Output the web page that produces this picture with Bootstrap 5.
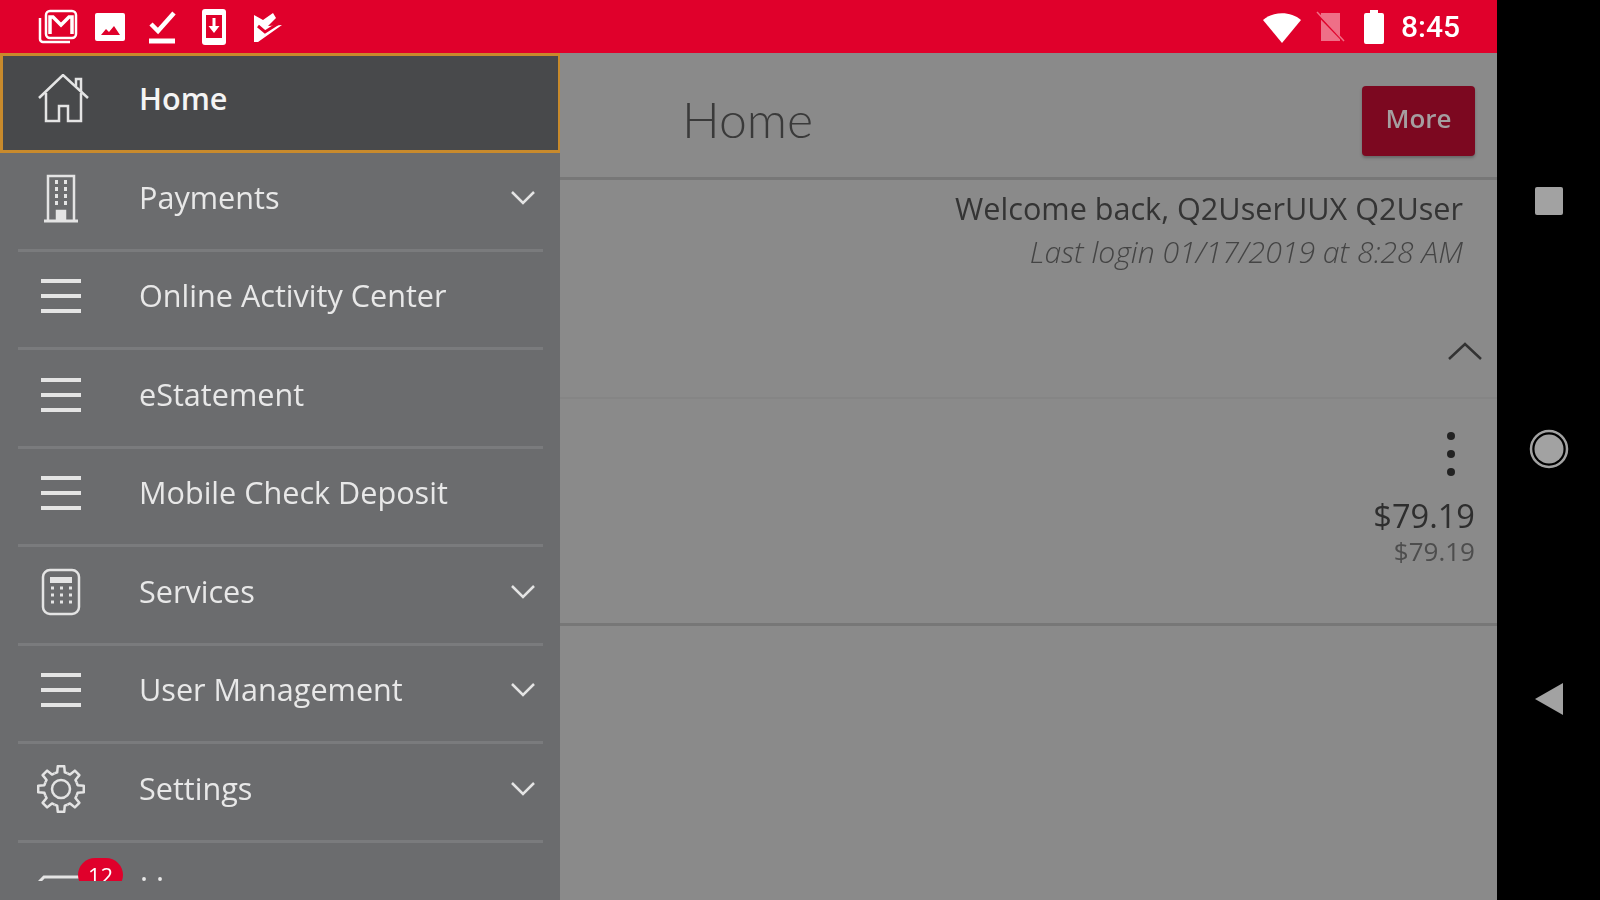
<!DOCTYPE html>
<html lang="en">
<head>
  <meta charset="UTF-8">
  <title>Home</title>
  <link href="https://cdn.jsdelivr.net/npm/bootstrap@5.3.3/dist/css/bootstrap.min.css" rel="stylesheet">
  <style>
    html, body { height: 900px; overflow: hidden; background: #000; }
    body { font-family: "Open Sans", "Liberation Sans", sans-serif; }
    .screen { width: 1497px; height: 900px; }
    .status-bar > div, .side-clip, .main-pane > div, .nav-rail { filter: blur(.7px); }
    .status-bar { height: 53px; background: #e0002b; color: #fff; padding: 0 37px 0 38px; }
    .status-icons { gap: 12px; }
    .status-time { font-family: Roboto, sans-serif; font-size: 30px; font-weight: 500; line-height: 1; margin-left: 16px; }
    .sim-icon { margin-left: 13px; }
    .batt-icon { margin-left: 18px; }
    .side-menu { width: 560px; height: 847px; background: #6b6c6e; }
    .side-clip { height: 828px; overflow: hidden; }
    .menu-row { background: transparent; border: 0; padding: 0; color: #e8e8e8; font-size: 30.6px; }
    .menu-inner { height: 98.5px; margin: 0 17px 0 18px; padding-bottom: 6px; border-bottom: 3px solid #7a7b7d; }
    .menu-row.active-row { height: 100px; background: #48494b; border: 3px solid #c88a2c; border-right-width: 2px; color: #f4f4f4; font-weight: 600; margin: 0; }
    .active-row .menu-inner { height: auto; flex-grow: 1; margin: 0 0 0 15px; border: 0; padding-bottom: 8px; }
    .menu-icon { width: 84px; flex: none; padding-left: 2px; margin-right: 37px; text-align: center; line-height: 0; }
    .home-icon { margin-left: 5px; }
    .menu-chevron { margin-left: auto; margin-right: 7px; line-height: 0; }
    .badge-count { position: absolute; left: 78px; top: 15px; width: 45px; height: 34px; border-radius: 17px; background: #e0002b; color: #fff; font-size: 22px; text-align: center; line-height: 34px; }
    .last-row { height: 70px; padding: 30px 0 0 38px; }
    .last-dots { margin: -19px 0 0 58px; line-height: 1; }
    .main-pane { background: #8a8a8a; color: #333; }
    .page-head { height: 127px; padding: 12px 22px 0 122px; border-bottom: 3px solid #777; }
    .page-title { font-family: Lato, sans-serif; font-weight: 300; font-size: 50px; margin: 0 0 4px; color: #3a3a3a; }
    .more-btn { width: 113px; height: 70px; background: #7c0820; border: 0; color: #a59ea0; font-size: 26px; font-weight: 600; padding: 0 0 6px; box-shadow: 0 2px 3px rgba(0,0,0,.25); }
    .welcome-box { padding: 6px 34px 0 0; text-align: right; font-size: 30.6px; line-height: 44px; color: #343434; }
    .last-login { font-style: italic; font-weight: 300; font-size: 30.2px; color: #444; }
    .collapse-row { height: 125px; padding: 31px 15px 0 0; border-bottom: 2px solid #858585; text-align: right; line-height: 0; }
    .account-row { height: 227px; padding: 0 22px 0 0; border-bottom: 3px solid #777; text-align: right; }
    .dots-btn { padding: 32px 19px 0 0; line-height: 0; }
    .amount-main { font-size: 32.6px; font-weight: 500; line-height: 40px; margin-top: 19px; color: #2e2e2e; }
    .amount-sub { font-size: 26px; line-height: 32px; margin-top: -1px; color: #4d4d4d; }
    .nav-rail { width: 103px; background: #000; padding-top: 187px; }
    .nav-rail svg { display: block; }
    .nav-circle, .nav-back { margin-top: 214px; }
  </style>
</head>
<body class="d-flex">

  <div class="screen d-flex flex-column">
    <div class="status-bar d-flex align-items-center justify-content-between">
      <div class="status-icons d-flex">
        <svg width="40" height="36" viewBox="0 0 40 36" fill="none" stroke="#fff"><path d="M2 9v21a3 3 0 0 0 3 3h27" stroke-width="2.500"/><rect x="8" y="2" width="30" height="27" rx="4" fill="#e0002b" stroke-width="2.500"/><path d="M12 25V8h3l8 8 8-8h3v17" stroke-width="3.500"/></svg>
        <svg width="40" height="36" viewBox="0 0 40 36"><path fill="#fff" d="M7 4h26a2 2 0 0 1 2 2v24a2 2 0 0 1-2 2H7a2 2 0 0 1-2-2V6a2 2 0 0 1 2-2z"/><path fill="#e0002b" d="M11 26l5-6 3 3 5-6 6 9z"/></svg>
        <svg width="40" height="36" viewBox="0 0 40 36" fill="none" stroke="#fff"><path d="M9 15l7 7L32 4" stroke-width="4.500"/><path d="M7 32h26" stroke-width="5"/></svg>
        <svg width="40" height="36" viewBox="0 0 40 36"><path fill="#fff" d="M11 0h18a3 3 0 0 1 3 3v30a3 3 0 0 1-3 3H11a3 3 0 0 1-3-3V3a3 3 0 0 1 3-3z"/><rect x="12" y="6" width="16" height="23" fill="#e0002b"/><path fill="#fff" d="M18.500 9h3v8h4l-5.500 7-5.500-7h4z"/></svg>
        <svg width="40" height="36" viewBox="0 0 40 36"><path fill="#fff" d="M8 6l9 5 10-7 3 5-8 8 14-1-24 17h-4z"/><path fill="none" stroke="#e0002b" stroke-width="3" d="M12 17l7 6 14-9"/></svg>
      </div>
      <div class="d-flex align-items-center">
        <svg width="40" height="34" viewBox="0 0 40 34"><path fill="#fff" d="M1 10C11 1 29 1 39 10L20 33z"/></svg>
        <svg width="30" height="32" viewBox="0 0 30 32" class="sim-icon"><path fill="#ef6f87" d="M6 2h19v28H6z"/><path stroke="#e0002b" stroke-width="2" d="M0 1l30 31"/><path stroke="#ef6f87" stroke-width="1.500" d="M2 1l27 29"/></svg>
        <svg width="22" height="34" viewBox="0 0 22 34" class="batt-icon"><path fill="#fff" d="M7 0h8v3h4a2 2 0 0 1 2 2v27a2 2 0 0 1-2 2H3a2 2 0 0 1-2-2V5a2 2 0 0 1 2-2h4z"/></svg>
        <span class="status-time">8:45</span>
      </div>
    </div>

    <div class="d-flex flex-grow-1">
      <div class="side-menu">
        <div class="side-clip">
          <ul class="list-group list-group-flush rounded-0">
            <li class="list-group-item menu-row active-row d-flex">
              <div class="menu-inner d-flex align-items-center">
                <span class="menu-icon"><svg width="52" height="50" viewBox="0 0 52 50" fill="none" stroke="#e4e4e4" stroke-width="2.500" class="home-icon"><path d="M1 24L25 1l25 23"/><path d="M38 12V5h5v13"/><path d="M8 19v28h13V32h9v15h13V19"/></svg></span>
                <span>Home</span>
              </div>
            </li>
            <li class="list-group-item menu-row">
              <div class="menu-inner d-flex align-items-center">
                <span class="menu-icon"><svg width="34" height="50" viewBox="0 0 34 50" fill="none" stroke="#e4e4e4" stroke-width="2.500"><path d="M4 47V3h26v44"/><path d="M0 48h34" stroke-width="3"/><path d="M11 9h3M20 9h3M11 16h3M20 16h3M11 23h3M20 23h3M11 30h3M20 30h3" stroke-width="4"/><path d="M13 47v-9h8v9" fill="#e4e4e4"/></svg></span>
                <span>Payments</span>
                <span class="menu-chevron"><svg width="26" height="16" viewBox="0 0 26 16" fill="none" stroke="#e4e4e4" stroke-width="2.500"><path d="M2 2l11 11L24 2"/></svg></span>
              </div>
            </li>
            <li class="list-group-item menu-row">
              <div class="menu-inner d-flex align-items-center">
                <span class="menu-icon"><svg width="40" height="36" viewBox="0 0 40 36" fill="none" stroke="#e4e4e4" stroke-width="4"><path d="M0 3h40M0 18h40M0 33h40"/></svg></span>
                <span>Online Activity Center</span>
              </div>
            </li>
            <li class="list-group-item menu-row">
              <div class="menu-inner d-flex align-items-center">
                <span class="menu-icon"><svg width="40" height="36" viewBox="0 0 40 36" fill="none" stroke="#e4e4e4" stroke-width="4"><path d="M0 3h40M0 18h40M0 33h40"/></svg></span>
                <span>eStatement</span>
              </div>
            </li>
            <li class="list-group-item menu-row">
              <div class="menu-inner d-flex align-items-center">
                <span class="menu-icon"><svg width="40" height="36" viewBox="0 0 40 36" fill="none" stroke="#e4e4e4" stroke-width="4"><path d="M0 3h40M0 18h40M0 33h40"/></svg></span>
                <span>Mobile Check Deposit</span>
              </div>
            </li>
            <li class="list-group-item menu-row">
              <div class="menu-inner d-flex align-items-center">
                <span class="menu-icon"><svg width="40" height="48" viewBox="0 0 40 48" fill="none" stroke="#e4e4e4" stroke-width="2.500"><rect x="2" y="2" width="36" height="44" rx="7"/><rect x="9" y="9" width="22" height="6" fill="#e4e4e4" stroke="none"/><path d="M10 20h3M19 20h3M28 20h3M10 27h3M19 27h3M28 27h3M10 34h3M19 34h3M28 34h3" stroke-width="3"/></svg></span>
                <span>Services</span>
                <span class="menu-chevron"><svg width="26" height="16" viewBox="0 0 26 16" fill="none" stroke="#e4e4e4" stroke-width="2.500"><path d="M2 2l11 11L24 2"/></svg></span>
              </div>
            </li>
            <li class="list-group-item menu-row">
              <div class="menu-inner d-flex align-items-center">
                <span class="menu-icon"><svg width="40" height="36" viewBox="0 0 40 36" fill="none" stroke="#e4e4e4" stroke-width="4"><path d="M0 3h40M0 18h40M0 33h40"/></svg></span>
                <span>User Management</span>
                <span class="menu-chevron"><svg width="26" height="16" viewBox="0 0 26 16" fill="none" stroke="#e4e4e4" stroke-width="2.500"><path d="M2 2l11 11L24 2"/></svg></span>
              </div>
            </li>
            <li class="list-group-item menu-row">
              <div class="menu-inner d-flex align-items-center">
                <span class="menu-icon"><svg width="48" height="48" viewBox="0 0 48 48" fill="none" stroke="#e4e4e4" stroke-width="2.500" stroke-linejoin="round"><circle cx="24" cy="24" r="9"/><path id="cog-tooth" d="M17.500 8.300L20.200 7.400 20.800 1.200H27.200L27.800 7.400 30.500 8.300"/><use href="#cog-tooth" transform="rotate(45 24 24)"/><use href="#cog-tooth" transform="rotate(90 24 24)"/><use href="#cog-tooth" transform="rotate(135 24 24)"/><use href="#cog-tooth" transform="rotate(180 24 24)"/><use href="#cog-tooth" transform="rotate(225 24 24)"/><use href="#cog-tooth" transform="rotate(270 24 24)"/><use href="#cog-tooth" transform="rotate(315 24 24)"/></svg></span>
                <span>Settings</span>
                <span class="menu-chevron"><svg width="26" height="16" viewBox="0 0 26 16" fill="none" stroke="#e4e4e4" stroke-width="2.500"><path d="M2 2l11 11L24 2"/></svg></span>
              </div>
            </li>
            <li class="list-group-item menu-row position-relative">
              <div class="last-row d-flex">
                <svg width="44" height="12" viewBox="0 0 44 12" fill="none" stroke="#e4e4e4" stroke-width="3"><path d="M44 4H6L1 9"/></svg>
                <span class="last-dots">. .</span>
              </div>
              <span class="badge-count">12</span>
            </li>
          </ul>
        </div>
      </div>

      <div class="main-pane flex-grow-1">
        <div class="page-head d-flex align-items-center justify-content-between">
          <h1 class="page-title">Home</h1>
          <button type="button" class="btn more-btn rounded-1">More</button>
        </div>
        <div class="welcome-box">
          <div>Welcome back, Q2UserUUX Q2User</div>
          <div class="last-login">Last login 01/17/2019 at 8:28 AM</div>
        </div>
        <div class="collapse-row d-flex align-items-center justify-content-end">
          <svg width="34" height="20" viewBox="0 0 34 20" fill="none" stroke="#333" stroke-width="2.500"><path d="M1 18L17 3l16 15"/></svg>
        </div>
        <div class="account-row">
          <div class="dots-btn"><svg width="10" height="46" viewBox="0 0 10 46" fill="#222"><circle cx="5" cy="5" r="4"/><circle cx="5" cy="23" r="4"/><circle cx="5" cy="41" r="4"/></svg></div>
          <div class="amount-main">$79.19</div>
          <div class="amount-sub">$79.19</div>
        </div>
      </div>
    </div>
  </div>

  <div class="nav-rail d-flex flex-column align-items-center">
    <svg width="28" height="28" viewBox="0 0 28 28"><rect width="28" height="28" rx="2" fill="#a2a2a2"/></svg>
    <svg width="40" height="40" viewBox="0 0 40 40" class="nav-circle"><circle cx="20" cy="20" r="18" fill="none" stroke="#a2a2a2" stroke-width="2.500"/><circle cx="20" cy="20" r="14.500" fill="#a2a2a2"/></svg>
    <svg width="28" height="32" viewBox="0 0 28 32" class="nav-back"><path d="M28 0v32L0 16z" fill="#a2a2a2"/></svg>
  </div>

  <script src="https://cdn.jsdelivr.net/npm/bootstrap@5.3.3/dist/js/bootstrap.bundle.min.js"></script>
</body>
</html>
